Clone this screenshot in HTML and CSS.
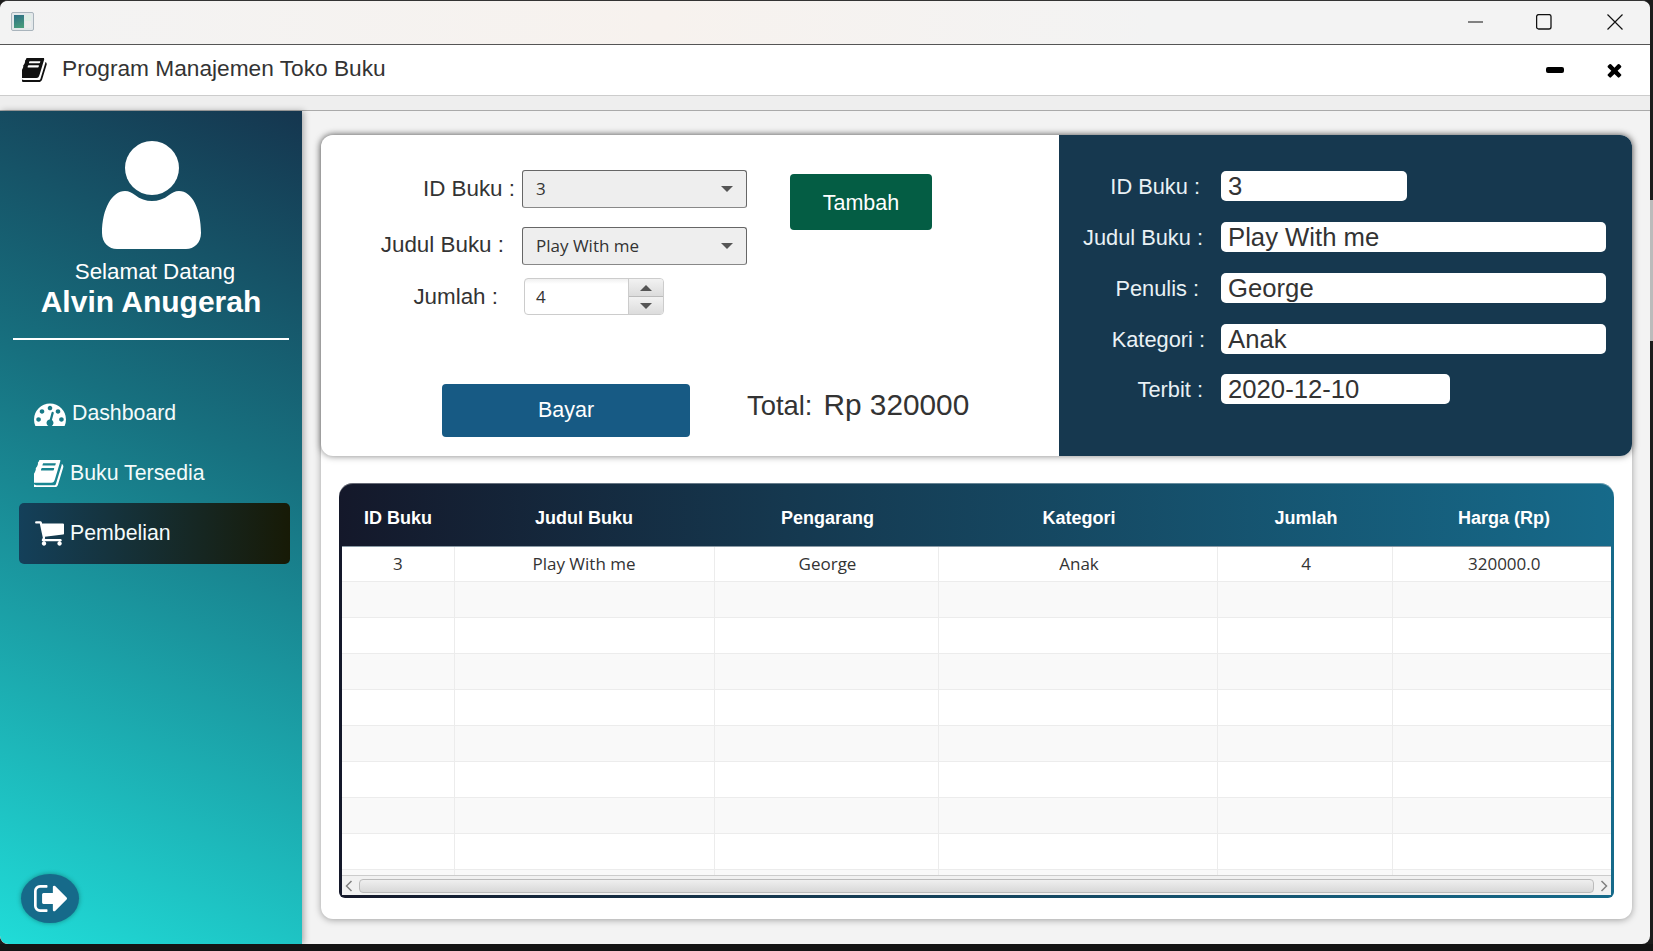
FILE: index.html
```html
<!DOCTYPE html>
<html lang="id">
<head>
  <meta charset="UTF-8">
  <meta name="viewport" content="width=device-width, initial-scale=1.0">
  <title>Program Manajemen Toko Buku</title>
  <link rel="stylesheet" href="styles.css">
</head>
<body>
  <div class="window">
    <div class="titlebar">
      <div class="app-thumb"><span class="thumb-a"></span><span class="thumb-b"></span></div>
      <div class="win-controls">
        <svg class="win-btn win-min" viewBox="0 0 16 16"><path d="M0 8h15" stroke="#111" stroke-width="1.200" fill="none"/></svg>
        <svg class="win-btn" viewBox="0 0 16 16"><rect x=".6" y=".6" width="14.400" height="14.400" rx="2" stroke="#111" stroke-width="1.300" fill="none"/></svg>
        <svg class="win-btn" viewBox="0 0 16 16"><path d="M.5.5l15 15M15.500.5l-15 15" stroke="#111" stroke-width="1.200" fill="none"/></svg>
      </div>
    </div>

    <div class="appbar">
      <svg class="appbar-icon" viewBox="150 220 1530 1410"><path d="M1639 478q40 57 18 129l-275 906q-19 64-76.500 107.500t-122.500 43.500h-923q-77 0-148.500-53.500t-99.500-131.500q-24-67-2-127 0-4 3-27t4-37q1-8-3-21.500t-3-19.500q2-11 8-21t16.500-23.500 16.500-23.500q23-38 45-91.500t30-91.500q3-10 .5-30t-.5-28q3-11 17-28t17-23q21-36 42-92t25-90q1-9-2.500-32t.5-28q4-13 22-30.500t22-22.500q19-26 42.500-84.500t27.500-96.500q1-8-3-25.500t-2-26.500q2-8 9-18t18-23 17-21q8-12 16.500-30.500t15-35 16-36 19.500-32 26.500-23.500 36-11.500 47.500 5.500l-1 3q38-9 51-9h761q74 0 114 56t18 130l-274 906q-36 119-71.500 153.500t-128.500 34.500h-869q-27 0-38 15-11 16-1 43 24 70 144 70h923q29 0 56-15.500t35-41.500l300-987q7-22 5-57 38 15 59 43zm-1064 2q-4 13 2 22.500t20 9.500h608q13 0 25.500-9.500t16.500-22.500l21-64q4-13-2-22.500t-20-9.500h-608q-13 0-25.500 9.500t-16.500 22.500zm-83 256q-4 13 2 22.500t20 9.500h608q13 0 25.500-9.500t16.500-22.500l21-64q4-13-2-22.500t-20-9.500h-608q-13 0-25.500 9.500t-16.500 22.500z"/></svg>
      <span class="appbar-title">Program Manajemen Toko Buku</span>
      <span class="appbar-min"></span>
      <svg class="appbar-close" viewBox="250 300 1300 1270"><path d="M1490 1322q0 40-28 68l-136 136q-28 28-68 28t-68-28l-294-294-294 294q-28 28-68 28t-68-28l-136-136q-28-28-28-68t28-68l294-294-294-294q-28-28-28-68t28-68l136-136q28-28 68-28t68 28l294 294 294-294q28-28 68-28t68 28l136 136q28 28 28 68t-28 68l-294 294 294 294q28 28 28 68z"/></svg>
    </div>
    <div class="strip"></div>

    <div class="main">
      <aside class="sidebar">
        <svg class="avatar" viewBox="0 0 100 109">
          <circle cx="50" cy="27" r="27"/>
          <path d="M23 50C27 50 30 52 33 54C38 58 44 60 50 60C56 60 62 58 67 54C70 52 73 50 77 50C90 50 99 68 99 92C99 102 92 108 84 108L15 108C7 108 0 102 0 92C0 68 10 50 23 50Z"/>
        </svg>
        <div class="welcome">Selamat Datang</div>
        <div class="username">Alvin Anugerah</div>
        <div class="divider"></div>
        <nav class="nav">
          <a class="nav-item">
            <svg class="nav-icon icon-dash" viewBox="0 192 1792 1250"><path d="M384 1152q0-53-37.500-90.500t-90.500-37.500-90.500 37.500-37.500 90.500 37.500 90.500 90.500 37.500 90.500-37.500 37.500-90.500zm192-448q0-53-37.500-90.500t-90.500-37.500-90.500 37.500-37.500 90.500 37.500 90.500 90.500 37.500 90.500-37.500 37.500-90.500zm428 481l101-382q6-26-7.500-48.500t-38.500-29.500-48 6.500-30 39.500l-101 382q-60 5-107 43.500t-63 98.500q-20 77 20 146t117 89 146-20 89-117q16-60-6-117t-72-91zm660-33q0-53-37.500-90.500t-90.500-37.500-90.500 37.500-37.500 90.500 37.500 90.500 90.500 37.500 90.500-37.500 37.500-90.500zm-640-640q0-53-37.500-90.500t-90.500-37.500-90.500 37.500-37.500 90.500 37.500 90.500 90.500 37.500 90.500-37.500 37.500-90.500zm448 192q0-53-37.500-90.500t-90.500-37.500-90.500 37.500-37.500 90.500 37.500 90.500 90.500 37.500 90.500-37.500 37.500-90.500zm320 448q0 261-141 483-19 29-54 29h-1402q-35 0-54-29-141-221-141-483 0-182 71-348t191-286 286-191 348-71 348 71 286 191 191 286 71 348z"/></svg>
            <span>Dashboard</span>
          </a>
          <a class="nav-item">
            <svg class="nav-icon" viewBox="150 220 1530 1410"><path d="M1639 478q40 57 18 129l-275 906q-19 64-76.500 107.500t-122.500 43.500h-923q-77 0-148.500-53.500t-99.500-131.500q-24-67-2-127 0-4 3-27t4-37q1-8-3-21.500t-3-19.500q2-11 8-21t16.500-23.500 16.500-23.500q23-38 45-91.500t30-91.500q3-10 .5-30t-.5-28q3-11 17-28t17-23q21-36 42-92t25-90q1-9-2.500-32t.5-28q4-13 22-30.500t22-22.500q19-26 42.500-84.500t27.500-96.500q1-8-3-25.500t-2-26.500q2-8 9-18t18-23 17-21q8-12 16.500-30.500t15-35 16-36 19.500-32 26.500-23.500 36-11.500 47.500 5.500l-1 3q38-9 51-9h761q74 0 114 56t18 130l-274 906q-36 119-71.500 153.500t-128.500 34.500h-869q-27 0-38 15-11 16-1 43 24 70 144 70h923q29 0 56-15.500t35-41.500l300-987q7-22 5-57 38 15 59 43zm-1064 2q-4 13 2 22.500t20 9.500h608q13 0 25.500-9.500t16.500-22.500l21-64q4-13-2-22.500t-20-9.500h-608q-13 0-25.500 9.500t-16.500 22.500zm-83 256q-4 13 2 22.500t20 9.500h608q13 0 25.500-9.500t16.500-22.500l21-64q4-13-2-22.500t-20-9.500h-608q-13 0-25.500 9.500t-16.500 22.500z"/></svg>
            <span>Buku Tersedia</span>
          </a>
          <a class="nav-item active">
            <svg class="nav-icon" viewBox="0 256 1728 1408"><path d="M704 1536q0 52-38 90t-90 38-90-38-38-90 38-90 90-38 90 38 38 90zm896 0q0 52-38 90t-90 38-90-38-38-90 38-90 90-38 90 38 38 90zm128-1088v512q0 24-16.500 42.500t-40.500 21.500l-1044 122q13 60 13 70 0 16-24 64h920q26 0 45 19t19 45-19 45-45 19h-1024q-26 0-45-19t-19-45q0-11 8-31.500t16-36 21.500-40 15.500-29.500l-177-823h-204q-26 0-45-19t-19-45 19-45 45-19h256q16 0 28.500 6.500t19.500 15.500 13 24.500 8 26 5.500 29.500 4.500 26h1201q26 0 45 19t19 45z"/></svg>
            <span>Pembelian</span>
          </a>
        </nav>
        <button class="logout">
          <svg class="logout-icon" viewBox="64 256 1568 1280"><path d="M704 1440q0 4 1 20t.5 26.500-3 23.500-10 19.500-20.500 6.500h-320q-119 0-203.500-84.500t-84.500-203.500v-704q0-119 84.500-203.500t203.500-84.500h320q13 0 22.500 9.500t9.500 22.500q0 4 1 20t.5 26.500-3 23.500-10 19.500-20.500 6.500h-320q-66 0-113 47t-47 113v704q0 66 47 113t113 47h312l11.500 1 11.500 3 8 5.500 7 9 2 13.500zm928-544q0 26-19 45l-544 544q-19 19-45 19t-45-19-19-45v-288h-448q-26 0-45-19t-19-45v-384q0-26 19-45t45-19h448v-288q0-26 19-45t45-19 45 19l544 544q19 19 19 45z"/></svg>
        </button>
      </aside>

      <section class="content">
        <div class="panel">
          <div class="top-card">
            <div class="order">
              <div class="order-fields">
                <div class="form-row row-id">
                  <label>ID Buku :</label>
                  <div class="combo"><span>3</span><i class="combo-arrow"></i></div>
                </div>
                <div class="form-row row-judul">
                  <label>Judul Buku :</label>
                  <div class="combo"><span>Play With me</span><i class="combo-arrow"></i></div>
                </div>
                <div class="form-row row-jumlah">
                  <label>Jumlah :</label>
                  <div class="spinner">
                    <span class="spinner-value">4</span>
                    <div class="spinner-btns">
                      <div class="spin-btn"><i class="tri-up"></i></div>
                      <div class="spin-btn"><i class="tri-down"></i></div>
                    </div>
                  </div>
                </div>
              </div>
              <div class="add-col"><button class="btn btn-add">Tambah</button></div>
              <div class="pay-row">
                <button class="btn btn-pay">Bayar</button>
                <div class="total">
                  <span class="total-label">Total:</span>
                  <span class="total-value">Rp 320000</span>
                </div>
              </div>
            </div>

            <div class="detail">
              <div class="detail-row d-id"><label>ID Buku :</label><div class="field field-short">3</div></div>
              <div class="detail-row d-judul"><label>Judul Buku :</label><div class="field">Play With me</div></div>
              <div class="detail-row d-penulis"><label>Penulis :</label><div class="field">George</div></div>
              <div class="detail-row d-kategori"><label>Kategori :</label><div class="field">Anak</div></div>
              <div class="detail-row d-terbit"><label>Terbit :</label><div class="field field-date">2020-12-10</div></div>
            </div>
          </div>

          <div class="table-wrap">
            <div class="table-clip">
              <table class="cart">
                <colgroup>
                  <col class="c1"><col class="c2"><col class="c3"><col class="c4"><col class="c5"><col class="c6">
                </colgroup>
                <thead>
                  <tr><th>ID Buku</th><th>Judul Buku</th><th>Pengarang</th><th>Kategori</th><th>Jumlah</th><th>Harga (Rp)</th></tr>
                </thead>
                <tbody>
                  <tr class="first-row"><td>3</td><td>Play With me</td><td>George</td><td>Anak</td><td>4</td><td>320000.0</td></tr>
                  <tr><td></td><td></td><td></td><td></td><td></td><td></td></tr>
                  <tr><td></td><td></td><td></td><td></td><td></td><td></td></tr>
                  <tr><td></td><td></td><td></td><td></td><td></td><td></td></tr>
                  <tr><td></td><td></td><td></td><td></td><td></td><td></td></tr>
                  <tr><td></td><td></td><td></td><td></td><td></td><td></td></tr>
                  <tr><td></td><td></td><td></td><td></td><td></td><td></td></tr>
                  <tr><td></td><td></td><td></td><td></td><td></td><td></td></tr>
                  <tr><td></td><td></td><td></td><td></td><td></td><td></td></tr>
                  <tr><td></td><td></td><td></td><td></td><td></td><td></td></tr>
                </tbody>
              </table>
            </div>
            <div class="hscroll">
              <svg class="chevron" viewBox="0 0 8 12"><path d="M6.500 1L1.500 6l5 5" stroke="#808080" stroke-width="1.500" fill="none"/></svg>
              <div class="thumb"></div>
              <svg class="chevron" viewBox="0 0 8 12"><path d="M1.500 1l5 5-5 5" stroke="#808080" stroke-width="1.500" fill="none"/></svg>
            </div>
          </div>
        </div>
      </section>
    </div>
  </div>
  <div class="bottom-edge"></div>
</body>
</html>
```

FILE: styles.css
```css
* { box-sizing: border-box; }
html, body { margin: 0; height: 951px; overflow: hidden; }
body { background: linear-gradient(#1c1c1c 200px, #bbbbbb 200px, #bbbbbb 341px, #1c1c1c 341px); font-family: "Liberation Sans", Arial, sans-serif; color: #333; }
button { font-family: inherit; border: 0; padding: 0; }
label { display: block; }

.window { width: 1650px; height: 944px; display: flex; flex-direction: column; background: #f3f3f3; border-top: 1px solid #333; border-radius: 8px 8px 8px 8px; overflow: hidden; }
.bottom-edge { height: 7px; background: #141414; }

/* title bar */
.titlebar { height: 44px; flex: none; display: flex; align-items: center; justify-content: space-between; padding: 0 27px 2px 11px; background: linear-gradient(90deg, #f3f3f3, #f7f2ee 40%, #f3f3f3 70%); border-bottom: 1px solid #555; }
.app-thumb { width: 23px; height: 19px; border: 1px solid #a9b4bc; border-radius: 2px; background: #e3e8ea; display: flex; padding: 2px; gap: 1px; }
.thumb-a { width: 11px; background: linear-gradient(160deg, #2e6f86, #49a07a); }
.thumb-b { width: 7px; background: linear-gradient(#dfeee5 50%, #ececec 50%); }
.win-controls { display: flex; align-items: center; gap: 55px; }
.win-btn { width: 16px; height: 16px; display: block; }
.win-min { margin-right: -3px; }

.appbar { height: 51px; flex: none; display: flex; align-items: center; padding: 1px 28px 1px 22px; background: #fff; border-bottom: 1px solid #ccc; }
.appbar-icon { width: 25px; height: 24px; fill: #111; }
.appbar-title { font-size: 22.700px; margin: 0 0 3px 15px; color: #333; }
.appbar-min { width: 18px; height: 6px; background: #000; border-radius: 2px; margin-left: auto; margin-right: 43px; }
.appbar-close { width: 15px; height: 15px; fill: #000; }
.strip { height: 15px; flex: none; background: #eeeeee; border-bottom: 1px solid #aaa; }

.main { flex: 1; display: flex; min-height: 0; }

/* sidebar */
.sidebar { width: 302px; flex: none; display: flex; flex-direction: column; padding-top: 30px; color: #fff; background: linear-gradient(204deg, #15364f 0%, #17707f 38%, #20dcd8 100%); box-shadow: 2px 0 6px rgba(0,0,0,0.3); border-bottom-left-radius: 8px; position: relative; }
.avatar { width: 100px; height: 109px; fill: #fff; margin-left: 102px; flex: none; }
.welcome { font-size: 22.400px; line-height: 26px; margin-top: 9px; text-align: center; padding-left: 8px; }
.username { font-size: 30px; line-height: 34px; font-weight: bold; text-align: center; }
.divider { height: 2px; width: 276px; margin: 19px 0 0 13px; background: #fff; flex: none; }
.nav { margin-top: 43px; display: flex; flex-direction: column; }
.nav-item { height: 60px; margin-left: 19px; width: 271px; display: flex; align-items: center; padding-left: 15px; font-size: 21.300px; gap: 6px; border-radius: 5px; color: #f4fbfb; }
.nav-item.active { height: 61px; background: linear-gradient(90deg, #14405a, #171a06); }
.nav-icon { width: 30px; height: 27px; fill: #fff; flex: none; }
.icon-dash { width: 32px; height: 25px; }
.logout { width: 58px; height: 49px; border-radius: 50%; background: #166a8a; margin: auto 0 21px 21px; box-shadow: 0 0 5px rgba(0,0,0,0.35); display: flex; align-items: center; justify-content: center; }
.logout-icon { width: 33px; height: 27px; fill: #fff; }

/* content */
.content { flex: 1; padding: 24px 18px 24px 19px; }
.panel { height: 784px; background: #fff; border-radius: 12px; box-shadow: 0 1px 7px rgba(0,0,0,0.35); }
.top-card { height: 321px; display: flex; border-radius: 12px; background: #fff; box-shadow: 0 0 7px rgba(0,0,0,0.5); }

.order { width: 738px; flex: none; display: grid; grid-template-columns: 469px 1fr; grid-template-rows: auto 1fr; padding-top: 35px; }
.order-fields { display: flex; flex-direction: column; }
.form-row { display: flex; align-items: center; font-size: 22.400px; }
.row-id label { width: 194px; margin-right: 7px; text-align: right; }
.row-judul { margin-top: 19px; }
.row-judul label { width: 183px; margin-right: 18px; padding-bottom: 2px; text-align: right; }
.row-jumlah { margin-top: 13px; }
.row-jumlah label { width: 177px; margin-right: 26px; text-align: right; }

.combo { width: 225px; height: 38px; display: flex; align-items: center; justify-content: space-between; padding: 0 13px 2px 13px; background: #eeeeee; border: 1px solid #666; border-bottom-color: #888; border-radius: 3px; font: 17px "Open Sans", sans-serif; }
.combo-arrow { width: 0; height: 0; margin-top: 2px; border-left: 6px solid transparent; border-right: 6px solid transparent; border-top: 6px solid #555; }

.spinner { width: 140px; height: 37px; display: flex; border: 1px solid #ccc; border-radius: 4px; background: linear-gradient(#f0f0f0, #fff 5px); overflow: hidden; }
.spinner-value { flex: 1; padding-left: 11px; font: 17px/35px "Open Sans", sans-serif; }
.spinner-btns { width: 35px; display: flex; flex-direction: column; border-left: 1px solid #ccc; }
.spin-btn { flex: 1; display: flex; align-items: center; justify-content: center; background: linear-gradient(#f2f2f2, #dcdcdc); border-bottom: 1px solid #bbb; }
.spin-btn:last-child { border-bottom: 0; }
.tri-up, .tri-down { width: 0; height: 0; border-left: 6px solid transparent; border-right: 6px solid transparent; }
.tri-up { border-bottom: 6px solid #555; }
.tri-down { border-top: 6px solid #555; }

.add-col { padding-top: 4px; }
.btn { color: #fff; font-size: 21.500px; border-radius: 4px; display: block; }
.btn-add { width: 142px; height: 56px; padding-top: 2px; background: #045d44; }
.pay-row { grid-column: 1 / 3; display: flex; padding: 69px 0 0 121px; }
.btn-pay { width: 248px; height: 53px; background: #175a84; }
.total { display: flex; align-items: baseline; margin: 3px 0 0 57px; gap: 11px; }
.total-label { font-size: 27.400px; }
.total-value { font-size: 29.800px; line-height: 36px; }

.detail { flex: 1; background: #16384f; border-radius: 0 12px 12px 0; padding-top: 36px; color: #e9f1f5; }
.detail-row { display: flex; align-items: center; height: 30px; margin-top: 21px; font-size: 21.800px; }
.detail-row:first-child { margin-top: 0; }
.detail-row label { width: 162px; padding-top: 2px; text-align: right; }
.d-id label { padding-right: 21px; }
.d-judul label { padding-right: 18px; }
.d-penulis label { padding-right: 22px; }
.d-kategori label { padding-right: 16px; }
.d-terbit label { padding-right: 18px; }
.d-terbit { margin-top: 20px; }
.field { width: 385px; height: 30px; background: #fff; border-radius: 5px; padding-left: 7px; font-size: 25.700px; line-height: 30px; color: #333; }
.field-short { width: 186px; }
.field-date { width: 229px; }

/* table */
.table-wrap { margin: 27px 18px 0; height: 415px; padding: 0 3px 3px; border-radius: 14px 14px 6px 6px; background: linear-gradient(90deg, #14182a, #15384f 35%, #166a8a); box-shadow: inset 0 1px 0 rgba(255,255,255,0.35); }
.table-clip { height: 392px; overflow: hidden; }
.cart { width: 1269px; table-layout: fixed; border-collapse: collapse; }
.c1 { width: 112px; } .c2 { width: 260px; } .c3 { width: 224px; }
.c4 { width: 279px; } .c5 { width: 175px; } .c6 { width: 219px; }
.cart th { height: 63px; color: #fff; font-size: 18px; font-weight: bold; text-align: center; padding: 8px 0 0; border-bottom: 1px solid #8a9aa5; }
.cart td { height: 36px; padding: 0; text-align: center; font: 17px "Open Sans", sans-serif; background: #fff; border-right: 1px solid #ececec; border-bottom: 1px solid #ececec; }
.cart th:nth-child(n+3), .cart td:nth-child(n+3) { padding-left: 3px; }
.cart th:last-child, .cart td:last-child { padding-left: 5px; }
.cart .first-row td { height: 35px; }
.cart td:last-child { border-right: 0; }
.cart tbody tr:nth-child(even) td { background: #f9f9f9; }
.hscroll { height: 20px; display: flex; align-items: center; justify-content: space-between; padding: 0 3px; background: #f1f1f1; border-top: 1px solid #ccc; }
.chevron { width: 8px; height: 12px; flex: none; }
.thumb { width: 1235px; height: 14px; border: 1px solid #bbb; border-radius: 4px; background: linear-gradient(#efefef, #d8d8d8); }
```
